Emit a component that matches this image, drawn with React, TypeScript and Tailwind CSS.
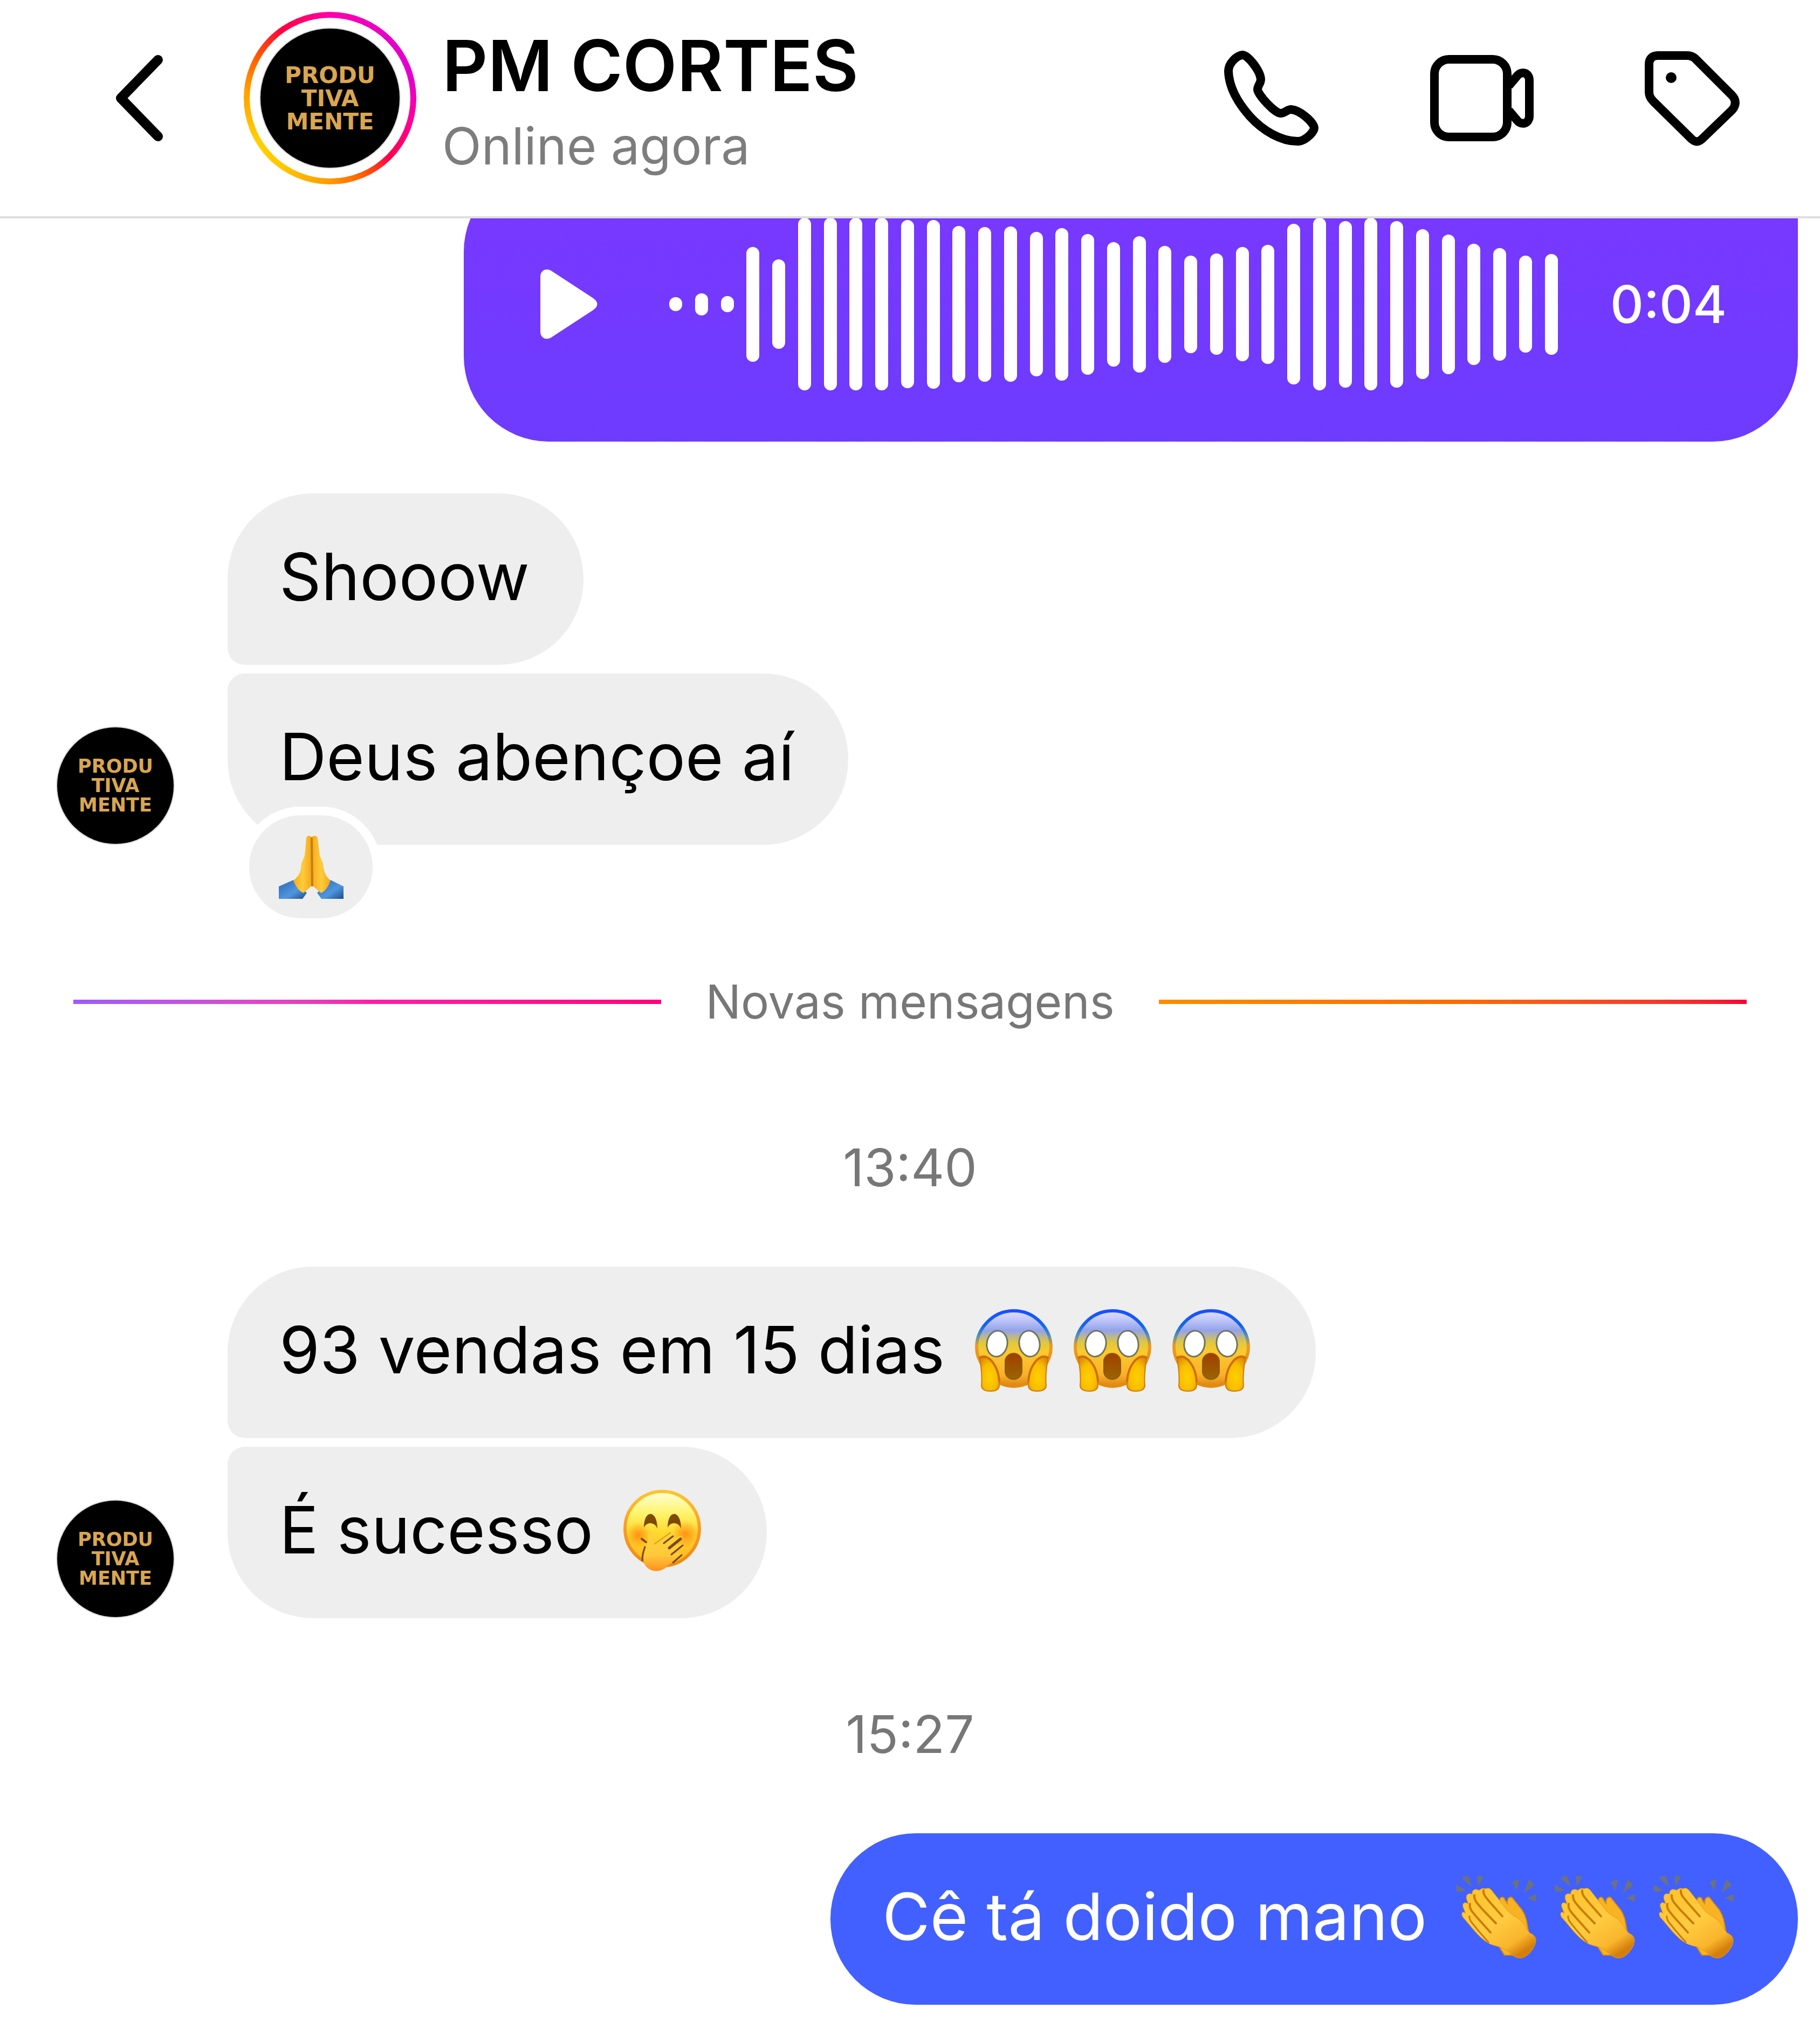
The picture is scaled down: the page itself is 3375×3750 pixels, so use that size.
import { useState } from "react";
import type { ReactNode } from "react";

const BARS = [
  26, 41, 30, 213, 166, 320, 320, 320, 320, 312, 313, 290, 287, 288, 268, 283, 261, 231,
  253, 217, 181, 188, 212, 221, 298, 320, 309, 320, 309, 278, 259, 225, 209, 180, 187,
];

function BackIcon() {
  return (
    <svg viewBox="0 0 88 160" className="w-[88px] h-[160px]" fill="none">
      <path d="M79 9 L10 80 L79 151" stroke="#000" strokeWidth="18" strokeLinecap="round" strokeLinejoin="round" />
    </svg>
  );
}

function PhoneIcon() {
  return (
    <svg viewBox="2270 92 178 178" className="w-[178px] h-[178px]" fill="none">
      <path
        d="M2304 101 C2294 103 2279 116 2279 131 C2280 160 2296 189 2318 214 C2343 242 2378 262 2409 261 C2422 260 2438 244 2438 236 C2437 226 2412 203 2395 202 C2388 202 2382 210 2375 209 C2364 208 2334 175 2333 165 C2333 158 2339 154 2339 146 C2338 130 2314 99 2304 101 Z"
        stroke="#000"
        strokeWidth="16"
        strokeLinejoin="round"
      />
    </svg>
  );
}

function VideoIcon() {
  return (
    <svg viewBox="0 0 194 162" className="w-[194px] h-[162px]" fill="none" stroke="#000" strokeWidth="16" strokeLinejoin="round">
      <rect x="9" y="9" width="135" height="144" rx="27" />
      <path d="M147 58 L163 39 C171 30 185 34 185 48 V114 C185 128 171 132 163 123 L147 104" />
    </svg>
  );
}

function TagIcon() {
  return (
    <svg viewBox="3049 92 178 178" className="w-[178px] h-[178px]" fill="none">
      <path
        d="M3074 102 H3128 C3134 102 3140 104 3144 108 L3211 175 C3220 184 3220 194 3212 203 L3156 257 C3149 263 3144 263 3137 257 L3066 187 C3060 181 3058 176 3058 170 V118 C3058 108 3064 102 3074 102 Z"
        stroke="#000"
        strokeWidth="16"
        strokeLinejoin="round"
      />
      <circle cx="3099" cy="143" r="10" fill="#000" />
    </svg>
  );
}

function ScreamEmoji() {
  return (
    <svg viewBox="0 0 152 160" className="w-[152px] h-[160px]" role="img" aria-label="😱">
      <defs>
        <linearGradient id="screamSkin" x1="0" y1="0" x2="0" y2="1">
          <stop offset="0" stopColor="#dfe0ff" />
          <stop offset="0.1" stopColor="#c6cbfb" />
          <stop offset="0.26" stopColor="#93a3ea" />
          <stop offset="0.42" stopColor="#e0c83e" />
          <stop offset="0.55" stopColor="#fdc92b" />
          <stop offset="0.85" stopColor="#f8b02a" />
          <stop offset="1" stopColor="#dd8410" />
        </linearGradient>
        <linearGradient id="screamRim" x1="0" y1="0" x2="0" y2="1">
          <stop offset="0" stopColor="#1750ff" />
          <stop offset="0.2" stopColor="#1266ee" />
          <stop offset="0.34" stopColor="#5c93ae" />
          <stop offset="0.46" stopColor="#eb9a22" />
          <stop offset="1" stopColor="#e28a14" />
        </linearGradient>
        <linearGradient id="screamMouth" x1="0" y1="0" x2="0" y2="1">
          <stop offset="0" stopColor="#a03f00" />
          <stop offset="1" stopColor="#996600" />
        </linearGradient>
        <radialGradient id="screamHand" cx="0.5" cy="0.6" r="0.65">
          <stop offset="0" stopColor="#ffd000" />
          <stop offset="0.6" stopColor="#f8bc00" />
          <stop offset="1" stopColor="#dd8c08" />
        </radialGradient>
      </defs>
      <path
        d="M76 8 C36 8 7 42 7 76 C7 92 14 104 20 112 C30 136 56 148 76 148 C96 148 122 136 132 112 C138 104 145 92 145 76 C145 42 116 8 76 8 Z"
        fill="url(#screamSkin)"
        stroke="url(#screamRim)"
        strokeWidth="6"
      />
      <g fill="#fff" stroke="#6f7460" strokeWidth="3">
        <ellipse cx="45" cy="69" rx="19" ry="24" transform="rotate(10 45 69)" />
        <ellipse cx="105" cy="69" rx="19" ry="24" transform="rotate(-10 105 69)" />
      </g>
      <rect x="60" y="87" width="31" height="48" rx="15" fill="url(#screamMouth)" stroke="#8d5a08" strokeWidth="2" />
      <g fill="url(#screamHand)" stroke="#d07a10" strokeWidth="2">
        <path d="M13 98 C16 92 24 92 30 97 C41 106 49 124 49 146 C49 154 42 157 33 157 C23 157 16 154 16 146 C18 128 15 110 13 98 Z" />
        <path d="M139 98 C136 92 128 92 122 97 C111 106 103 124 103 146 C103 154 110 157 119 157 C129 157 136 154 136 146 C134 128 137 110 139 98 Z" />
      </g>
      <g fill="none" stroke="#cd6e0c" strokeWidth="4" strokeLinecap="round">
        <path d="M13 95 C20 90 28 94 34 100 C43 110 48 124 49 138" />
        <path d="M139 95 C132 90 124 94 118 100 C109 110 104 124 103 138" />
      </g>
    </svg>
  );
}

function GiggleEmoji() {
  return (
    <svg viewBox="0 0 152 160" className="w-[152px] h-[160px]" role="img" aria-label="🤭">
      <defs>
        <linearGradient id="giggleFace" x1="0" y1="0" x2="0" y2="1">
          <stop offset="0" stopColor="#ffffd8" />
          <stop offset="0.3" stopColor="#fff36a" />
          <stop offset="0.55" stopColor="#ffd92e" />
          <stop offset="1" stopColor="#ffae1e" />
        </linearGradient>
        <linearGradient id="giggleRim" x1="0" y1="0" x2="0" y2="1">
          <stop offset="0" stopColor="#fdc52c" />
          <stop offset="0.5" stopColor="#fb9a26" />
          <stop offset="1" stopColor="#eb8a16" />
        </linearGradient>
        <radialGradient id="giggleBlush">
          <stop offset="0" stopColor="#ff7d10" stopOpacity="0.8" />
          <stop offset="1" stopColor="#ff8c10" stopOpacity="0" />
        </radialGradient>
        <linearGradient id="giggleHand" x1="0" y1="0" x2="0" y2="1">
          <stop offset="0" stopColor="#fbd33c" />
          <stop offset="0.6" stopColor="#ffc93a" />
          <stop offset="1" stopColor="#ff8f20" />
        </linearGradient>
      </defs>
      <circle cx="76" cy="78" r="69" fill="url(#giggleFace)" stroke="url(#giggleRim)" strokeWidth="6" />
      <circle cx="32" cy="90" r="24" fill="url(#giggleBlush)" />
      <circle cx="119" cy="88" r="26" fill="url(#giggleBlush)" />
      <g fill="#7d4a00">
        <path d="M42 76 C42 42 67 42 67 78 C63 66 48 64 42 76 Z" />
        <path d="M86 76 C86 42 111 42 111 78 C107 66 92 64 86 76 Z" />
      </g>
      <path
        d="M50 86 C53 82 59 84 60 90 L61 107 L92 84 C97 81 102 85 98 90 L84 103 L108 92 C115 91 115 97 110 100 L94 112 L110 106 C117 105 117 111 112 114 L96 124 L108 122 C113 122 113 127 109 130 L88 145 C76 160 56 160 46 148 C36 136 46 116 50 104 Z"
        fill="url(#giggleHand)"
      />
      <g fill="none" stroke="#7b4700" strokeWidth="3" strokeLinecap="round">
        <path d="M79 105 L96 92" />
        <path d="M89 114 L110 97" strokeWidth="5" />
        <path d="M93 126 L114 109" />
        <path d="M96 141 L112 127" />
        <path d="M38 97 L46 103" strokeWidth="4" />
        <path d="M44 112 C41 120 39 128 39 137" />
      </g>
      <path d="M61 107 L92 85" fill="none" stroke="#d89a20" strokeWidth="2" />
    </svg>
  );
}

function ClapEmoji() {
  return (
    <svg viewBox="0 0 152 160" className="w-[152px] h-[160px]" role="img" aria-label="👏">
      <defs>
        <linearGradient id="clapFront" x1="0" y1="0" x2="0.7" y2="1">
          <stop offset="0" stopColor="#ffc22a" />
          <stop offset="0.55" stopColor="#ffcb40" />
          <stop offset="0.85" stopColor="#f9b52c" />
          <stop offset="1" stopColor="#d47f0c" />
        </linearGradient>
      </defs>
      <g fill="#6b7280">
        <path d="M13 10 C17 4 23 4 26 7 L31 25 Z" />
        <path d="M41 6 C46 4 50 5 53 8 L43 24 Z" />
        <path d="M3 21 L20 32 C13 35 7 35 2 33 Z" />
        <path d="M106 17 C110 13 115 12 119 13 L115 32 Z" />
        <path d="M137 12 C142 15 146 19 147 23 L128 37 Z" />
        <path d="M134 46 L150 39 C151 44 151 48 150 53 Z" />
      </g>
      <path
        d="M83 50 C84 43 91 43 93 50 L97 56 C97 43 105 42 109 49 L125 69 C134 83 134 98 137 112 L108 152 L92 152 L78 130 Z"
        fill="#f8b325"
        stroke="#d58a0c"
        strokeWidth="2"
      />
      <path
        d="M57 29 C62 26 66 29 69 33 L98 70 C106 79 118 82 122 88 C132 98 134 106 139 111 C146 114 150 118 150 125 C150 137 136 155 124 157 C114 159 106 152 98 145 C89 137 78 136 67 132 C47 124 30 98 15 82 C10 74 15 69 20 75 L16 65 C12 56 18 52 25 57 L22 49 C19 40 25 36 32 39 C31 30 39 28 45 32 C48 29 52 27 57 29 Z"
        fill="url(#clapFront)"
        stroke="#e39a16"
        strokeWidth="1"
      />
      <g fill="none" stroke="#c97d08" strokeWidth="4" strokeLinecap="round">
        <path d="M53 32 C52 40 58 45 65 54 L88 80" />
        <path d="M36 41 C35 51 43 57 50 66 L76 93" />
        <path d="M28 57 C26 66 32 71 40 81 L66 110" />
        <path d="M27 80 C26 88 34 94 42 105 L62 128" strokeWidth="3" />
      </g>
    </svg>
  );
}

function PrayEmoji() {
  return (
    <svg viewBox="0 0 120 118" className="w-[120px] h-[118px]" role="img" aria-label="🙏">
      <defs>
        <linearGradient id="praySkin" x1="0" y1="0" x2="1" y2="0">
          <stop offset="0" stopColor="#f5ab1c" />
          <stop offset="0.5" stopColor="#ffcb3c" />
          <stop offset="1" stopColor="#f2a51a" />
        </linearGradient>
        <linearGradient id="praySleeve" x1="0" y1="0" x2="1" y2="1">
          <stop offset="0" stopColor="#2b68b4" />
          <stop offset="0.6" stopColor="#5096de" />
          <stop offset="1" stopColor="#1d4c8c" />
        </linearGradient>
      </defs>
      <path d="M0 95 L27 83 L52 107 L44 118 H0 Z" fill="url(#praySleeve)" />
      <path d="M120 95 L96 83 L71 107 L79 118 H120 Z" fill="url(#praySleeve)" />
      <path d="M61 4 C57 -1 52 1 51 5 L48 38 L42 52 C42 66 38 76 27 84 C31 95 37 103 45 107 C52 104 56 96 62 94 Z" fill="url(#praySkin)" />
      <path d="M61 4 C65 -1 71 1 72 5 L76 38 L82 52 C83 66 86 76 96 84 C92 95 87 103 79 107 C72 104 68 96 62 94 Z" fill="url(#praySkin)" />
      <path d="M61 6 L62 93" stroke="#c77c0c" strokeWidth="4" strokeLinecap="round" />
    </svg>
  );
}

function HeaderAvatar() {
  return (
    <div className="size-[320px] shrink-0 rounded-full p-[11px] bg-[conic-gradient(#ff00a8_0deg,#e600c8_40deg,#e400d0_75deg,#ff0098_105deg,#ff0048_135deg,#ff5a00_155deg,#ff9a00_180deg,#ffc800_215deg,#ffd000_240deg,#ffa000_275deg,#ff5a00_300deg,#ff0040_325deg,#ff00a8_360deg)]">
      <div className="size-full rounded-full bg-white p-[18px]">
        <div className="flex size-full flex-col items-center justify-center rounded-full border-2 border-[#dcdcdc] bg-black font-['DejaVu_Sans'] text-[42px] leading-[43px] font-bold text-[#d9a651]">
          <span>PRODU</span>
          <span>TIVA</span>
          <span>MENTE</span>
        </div>
      </div>
    </div>
  );
}

function SmallAvatar() {
  return (
    <div className="flex size-[220px] shrink-0 flex-col items-center justify-center rounded-full border-2 border-[#dcdcdc] bg-black font-['DejaVu_Sans'] text-[35px] leading-[36px] font-bold text-[#d9a651]">
      <span>PRODU</span>
      <span>TIVA</span>
      <span>MENTE</span>
    </div>
  );
}

function Bubble({ className, children }: { className: string; children: ReactNode }) {
  return (
    <div className={`flex h-[318px] items-center pr-[100px] pb-[10px] pl-24 text-[121px] leading-[150px] whitespace-pre ${className}`}>
      {children}
    </div>
  );
}

function Emojis({ children }: { children: ReactNode }) {
  return <span className="mr-[18px] ml-[52px] flex gap-[31px]">{children}</span>;
}

function Timestamp({ children }: { children: ReactNode }) {
  return <time className="block text-center text-[96px] leading-[120px] text-[#777]">{children}</time>;
}

export default function App() {
  const [playing, setPlaying] = useState(false);

  return (
    <div className="min-h-screen w-full overflow-hidden bg-white font-[Inter,sans-serif] text-black">
      <header className="flex h-[405px] items-center border-b-4 border-[#dedede] pr-[148px] pb-[37px] pl-[214px]">
        <button type="button" aria-label="Voltar" className="mr-[150px]">
          <BackIcon />
        </button>
        <HeaderAvatar />
        <div className="ml-12 flex-1 pt-[18px]">
          <h1 className="text-[131px] leading-[160px] font-semibold">PM CORTES</h1>
          <p className="text-[95px] leading-[138px] text-[#7d7d7d]">Online agora</p>
        </div>
        <div className="flex items-center gap-[204px]">
          <button type="button" aria-label="Ligar">
            <PhoneIcon />
          </button>
          <button type="button" aria-label="Chamada de vídeo">
            <VideoIcon />
          </button>
          <button type="button" aria-label="Etiqueta">
            <TagIcon />
          </button>
        </div>
      </header>

      <main className="overflow-hidden pb-8">
        {/* Voice message, scrolled partly under the header */}
        <div className="-mt-24 mr-[41px] ml-auto flex h-[510px] w-[2474px] items-center rounded-[158px] rounded-tr-[32px] bg-linear-to-b from-[#7a37ff] to-[#6d3bff] pr-[132px] pl-[142px] text-white">
          <button type="button" aria-label="Reproduzir" aria-pressed={playing} onClick={() => setPlaying(!playing)}>
            <svg viewBox="0 0 106 130" className="w-[106px] h-[130px]">
              <path d="M0 14 C0 3 10 -3 20 3 L98 54 C108 61 108 69 98 76 L20 127 C10 133 0 127 0 116 Z" fill="#fff" />
            </svg>
          </button>
          <div className="ml-[133px] flex w-[1648px] items-center justify-between">
            {BARS.map((height, i) => (
              <span key={i} className="w-6 rounded-full bg-white" style={{ height }} />
            ))}
          </div>
          <span className="ml-auto text-[96px] leading-[120px] font-medium">0:04</span>
        </div>

        <section className="mt-24 flex items-end gap-[98px] pl-[104px]">
          <SmallAvatar />
          <div className="flex flex-col items-start gap-4">
            <Bubble className="rounded-[158px] rounded-bl-[32px] bg-[#eee]">Shooow</Bubble>
            <div className="relative">
              <Bubble className="rounded-[158px] rounded-tl-[32px] bg-[#eee]">Deus abençoe aí</Bubble>
              <div className="absolute top-[247px] left-6 flex h-[223px] w-[261px] items-center justify-center rounded-[112px] border-16 border-white bg-[#eee]">
                <PrayEmoji />
              </div>
            </div>
          </div>
        </section>

        <div className="mt-[231px] flex items-center gap-[82px] px-[136px]">
          <div className="h-2 flex-1 bg-linear-to-r from-[#9b5cff] via-[#ff1ea8] to-[#ff0078]" />
          <span className="text-[87px] leading-[120px] text-[#777]">Novas mensagens</span>
          <div className="h-2 flex-1 bg-linear-to-r from-[#ff8c00] via-[#ff6a00] to-[#f60034]" />
        </div>

        <div className="mt-[187px]">
          <Timestamp>13:40</Timestamp>
        </div>

        <section className="mt-[124px] flex items-end gap-[98px] pl-[104px]">
          <SmallAvatar />
          <div className="flex flex-col items-start gap-4">
            <Bubble className="rounded-[158px] rounded-bl-[32px] bg-[#eee]">
              93 vendas em 15 dias
              <Emojis>
                <ScreamEmoji />
                <ScreamEmoji />
                <ScreamEmoji />
              </Emojis>
            </Bubble>
            <Bubble className="rounded-[158px] rounded-tl-[32px] bg-[#eee]">
              É sucesso
              <Emojis>
                <GiggleEmoji />
              </Emojis>
            </Bubble>
          </div>
        </section>

        <div className="mt-[155px]">
          <Timestamp>15:27</Timestamp>
        </div>

        <Bubble className="mt-[124px] mr-[41px] ml-auto w-fit rounded-[158px] bg-[#4260ff] text-white">
          Cê tá doido mano
          <Emojis>
            <ClapEmoji />
            <ClapEmoji />
            <ClapEmoji />
          </Emojis>
        </Bubble>
      </main>
    </div>
  );
}
